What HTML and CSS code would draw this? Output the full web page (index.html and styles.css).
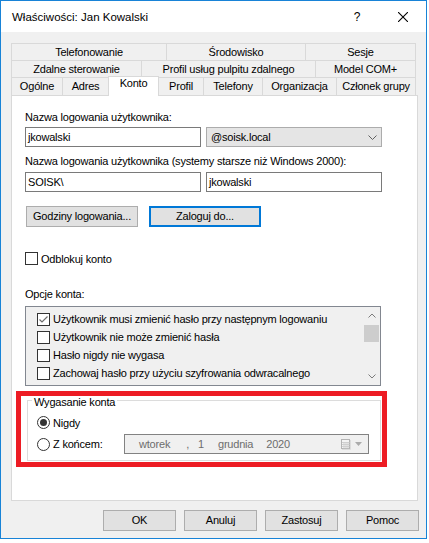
FILE: index.html
```html
<!DOCTYPE html>
<html lang="pl">
<head>
<meta charset="utf-8">
<title>Właściwości: Jan Kowalski</title>
<link rel="stylesheet" href="styles.css">
</head>
<body>
<div class="window">
  <div class="titlebar">
    <span class="title">Właściwości: Jan Kowalski</span>
    <div class="tb-btn help">?</div>
    <div class="tb-btn close">
      <svg width="10" height="10" viewBox="0 0 10 10"><path d="M0 0L10 10M10 0L0 10" stroke="#000" stroke-width="1.1" fill="none"/></svg>
    </div>
  </div>
  <div class="client">
    <div class="tabs">
      <div class="tab-row">
        <div class="tab w155">Telefonowanie</div>
        <div class="tab w139">Środowisko</div>
        <div class="tab w111">Sesje</div>
      </div>
      <div class="tab-row">
        <div class="tab w130">Zdalne sterowanie</div>
        <div class="tab w174">Profil usług pulpitu zdalnego</div>
        <div class="tab w101">Model COM+</div>
      </div>
      <div class="tab-row row3">
        <div class="tab w51">Ogólne</div>
        <div class="tab w46">Adres</div>
        <div class="tab w51 active">Konto</div>
        <div class="tab w45">Profil</div>
        <div class="tab w59">Telefony</div>
        <div class="tab w74">Organizacja</div>
        <div class="tab w80">Członek grupy</div>
      </div>
    </div>
    <div class="panel">
      <div class="label">Nazwa logowania użytkownika:</div>
      <div class="field-row r1">
        <div class="input">jkowalski</div>
        <div class="select"><span>@soisk.local</span>
          <svg width="9" height="5" viewBox="0 0 9 5"><polyline points="0.5,0.5 4.5,4.5 8.5,0.5" fill="none" stroke="#606060"/></svg>
        </div>
      </div>
      <div class="label l2">Nazwa logowania użytkownika (systemy starsze niż Windows 2000):</div>
      <div class="field-row r2">
        <div class="input">SOISK\</div>
        <div class="input">jkowalski</div>
      </div>
      <div class="btn-row">
        <div class="btn wide">Godziny logowania...</div>
        <div class="btn wide default">Zaloguj do...</div>
      </div>
      <div class="check-row">
        <span class="cb"></span><span>Odblokuj konto</span>
      </div>
      <div class="label l3">Opcje konta:</div>
      <div class="listbox">
        <div class="list-items">
          <div class="list-item"><span class="cb checked"><svg width="11" height="11" viewBox="0 0 11 11"><polyline points="1.5,5.5 4,8 9.5,2.5" fill="none" stroke="#6d6d6d" stroke-width="1.2"/></svg></span><span>Użytkownik musi zmienić hasło przy następnym logowaniu</span></div>
          <div class="list-item"><span class="cb"></span><span>Użytkownik nie może zmienić hasła</span></div>
          <div class="list-item"><span class="cb"></span><span>Hasło nigdy nie wygasa</span></div>
          <div class="list-item"><span class="cb"></span><span>Zachowaj hasło przy użyciu szyfrowania odwracalnego</span></div>
        </div>
        <div class="scrollbar">
          <div class="sb-btn"><svg width="8" height="5" viewBox="0 0 8 5"><polyline points="0.5,4.5 4,1 7.5,4.5" fill="none" stroke="#7c7c7c"/></svg></div>
          <div class="sb-thumb"></div>
          <div class="sb-space"></div>
          <div class="sb-btn"><svg width="8" height="5" viewBox="0 0 8 5"><polyline points="0.5,0.5 4,4 7.5,0.5" fill="none" stroke="#7c7c7c"/></svg></div>
        </div>
      </div>
      <div class="highlight">
        <div class="groupbox">
          <div class="legend">Wygasanie konta</div>
          <div class="gb-row1">
            <span class="radio on"><span class="dot"></span></span><span class="radio-text">Nigdy</span>
          </div>
          <div class="gb-row2">
            <span class="radio"></span><span class="radio-text">Z końcem:</span>
            <div class="dtp">
              <span class="d-wday">wtorek</span><span class="d-comma">,</span><span class="d-day">1</span><span class="d-month">grudnia</span><span class="d-year">2020</span>
              <svg class="d-cal" width="10" height="11" viewBox="0 0 10 11"><rect x="0.5" y="0.5" width="8" height="9" fill="#f4f4f4" stroke="#b4b4b4"/><path d="M1 3.5H8.5M1 5.5H8.5M1 7.5H8.5M3 3V9.5M5 3V9.5M7 3V9.5" stroke="#cfcfcf"/><path d="M1 10.5H9.5V1" stroke="#dcdcdc" fill="none"/></svg>
              <svg class="d-arrow" width="7" height="4" viewBox="0 0 7 4"><polygon points="0,0 7,0 3.5,4" fill="#ababab"/></svg>
            </div>
          </div>
        </div>
      </div>
    </div>
    <div class="footer">
      <div class="btn">OK</div>
      <div class="btn">Anuluj</div>
      <div class="btn">Zastosuj</div>
      <div class="btn">Pomoc</div>
    </div>
  </div>
</div>
</body>
</html>
```

FILE: styles.css
```css
body {
  margin: 0;
  background: #fff;
  font-family: "Liberation Sans", Arial, sans-serif;
  font-size: 11px;
  letter-spacing: -0.2px;
  color: #000;
}

.window {
  width: 427px;
  height: 539px;
  box-sizing: border-box;
  border: 1px solid #1883d7;
  background: #f0f0f0;
  display: flex;
  flex-direction: column;
}

.titlebar {
  flex: none;
  height: 31px;
  background: #fff;
  display: flex;
  align-items: center;
}

.title {
  flex: 1;
  padding-left: 11px;
  font-size: 11.5px;
  letter-spacing: 0;
}

.tb-btn {
  width: 46px;
  height: 31px;
  display: flex;
  align-items: center;
  justify-content: center;
}

.help {
  font-size: 12px;
  letter-spacing: 0;
}

.client {
  flex: 1;
  padding: 11px 7px 0 10px;
  display: flex;
  flex-direction: column;
}

/* tabs */
.tabs {
  width: 405px;
}

.tab-row {
  display: flex;
  height: 17px;
}

.tab {
  box-sizing: border-box;
  border-top: 1px solid #d9d9d9;
  border-left: 1px solid #d9d9d9;
  text-align: center;
  line-height: 16px;
  white-space: nowrap;
}

.tab:last-child {
  border-right: 1px solid #d9d9d9;
}

.row3 {
  height: 18px;
}

.row3 .tab {
  padding-top: 2px;
  line-height: 13px;
}

.row3 .tab.active {
  background: #fff;
  height: 20px;
  margin-top: -1px;
  margin-right: -1px;
  padding-top: 0;
  border-right: 1px solid #d9d9d9;
  z-index: 1;
}

.w155 { width: 155px; }
.w139 { width: 139px; }
.w111 { width: 111px; }
.w130 { width: 130px; }
.w174 { width: 174px; }
.w101 { width: 101px; }
.w51 { width: 51px; }
.w46 { width: 46px; }
.w45 { width: 45px; }
.w59 { width: 59px; }
.w74 { width: 74px; }
.w80 { width: 80px; }

/* panel */
.panel {
  width: 407px;
  height: 406px;
  box-sizing: border-box;
  border: 1px solid #d9d9d9;
  background: #fff;
  padding: 15px 0 0 13px;
}

.label {
  line-height: 13px;
  white-space: nowrap;
}

.l2 { margin-top: 8px; }
.l3 { margin-top: 23px; }

.field-row {
  display: flex;
  gap: 5px;
}

.r1 { margin-top: 3px; }
.r2 { margin-top: 4px; }

.input {
  box-sizing: border-box;
  width: 176px;
  height: 20px;
  border: 1px solid #7a7a7a;
  padding: 0 2px;
  line-height: 18px;
  background: #fff;
}

.select {
  box-sizing: border-box;
  width: 176px;
  height: 20px;
  border: 1px solid #acacac;
  background: #e5e5e5;
  padding: 0 4px 0 4px;
  line-height: 18px;
  display: flex;
  align-items: center;
  justify-content: space-between;
}

.btn-row {
  display: flex;
  gap: 11px;
  margin-top: 14px;
  padding-left: 1px;
}

.btn {
  box-sizing: border-box;
  width: 73px;
  height: 21px;
  border: 1px solid #adadad;
  background: #e1e1e1;
  text-align: center;
  line-height: 19px;
}

.btn.wide {
  width: 112px;
}

.btn.default {
  border: 2px solid #0078d7;
  line-height: 17px;
}

.check-row {
  display: flex;
  align-items: center;
  height: 13px;
  margin-top: 25px;
}

.cb {
  flex: none;
  box-sizing: border-box;
  width: 13px;
  height: 13px;
  border: 1px solid #333;
  background: #fff;
  margin-right: 3px;
  display: flex;
}

/* listbox */
.listbox {
  box-sizing: border-box;
  width: 356px;
  height: 80px;
  margin-top: 5px;
  border: 1px solid #828790;
  background: #f0f0f0;
  display: flex;
}

.list-items {
  flex: 1;
  padding: 3px 0 0 11px;
}

.list-item {
  height: 18px;
  display: flex;
  align-items: center;
  white-space: nowrap;
}

.scrollbar {
  width: 17px;
  display: flex;
  flex-direction: column;
  align-items: center;
}

.sb-btn {
  height: 17px;
  width: 17px;
  display: flex;
  align-items: center;
  justify-content: center;
}

.sb-thumb {
  width: 15px;
  height: 17px;
  margin-top: 1px;
  background: #cdcdcd;
}

.sb-space {
  flex: 1;
}

/* highlighted group */
.highlight {
  box-sizing: border-box;
  width: 371px;
  height: 76px;
  margin: 5px 0 0 -9px;
  border: 5px solid #ed1c24;
}

.groupbox {
  width: 354px;
  box-sizing: border-box;
  margin: 4px 0 0 6px;
  border: 1px solid #dcdcdc;
  padding-bottom: 6px;
}

.legend {
  width: fit-content;
  margin: -5px 0 0 4px;
  padding: 0 2px;
  background: #fff;
  line-height: 13px;
}

.gb-row1 {
  display: flex;
  align-items: center;
  height: 13px;
  margin-top: 7px;
  padding-left: 9px;
}

.gb-row2 {
  display: grid;
  grid-template-columns: 13px 74px 245px;
  align-items: center;
  height: 20px;
  margin-top: 5px;
  padding-left: 9px;
}

.radio {
  box-sizing: border-box;
  width: 13px;
  height: 13px;
  border-radius: 50%;
  border: 1px solid #333;
  background: #fff;
  display: flex;
  align-items: center;
  justify-content: center;
}

.dot {
  width: 7px;
  height: 7px;
  border-radius: 50%;
  background: #333;
}

.radio-text {
  padding-left: 3px;
}

.dtp {
  box-sizing: border-box;
  width: 245px;
  height: 20px;
  border: 1px solid #828282;
  background: #f0f0f0;
  color: #6d6d6d;
  display: flex;
  align-items: center;
  padding-right: 6px;
}

.d-wday { margin-left: 14px; }
.d-comma { margin-left: 16px; }
.d-day { margin-left: 9px; }
.d-month { margin-left: 14px; }
.d-year { margin-left: 13px; }
.d-cal { margin-left: auto; }
.d-arrow { margin-left: 4px; }

/* footer */
.footer {
  display: flex;
  justify-content: flex-end;
  gap: 8px;
  margin-top: 9px;
}
```
